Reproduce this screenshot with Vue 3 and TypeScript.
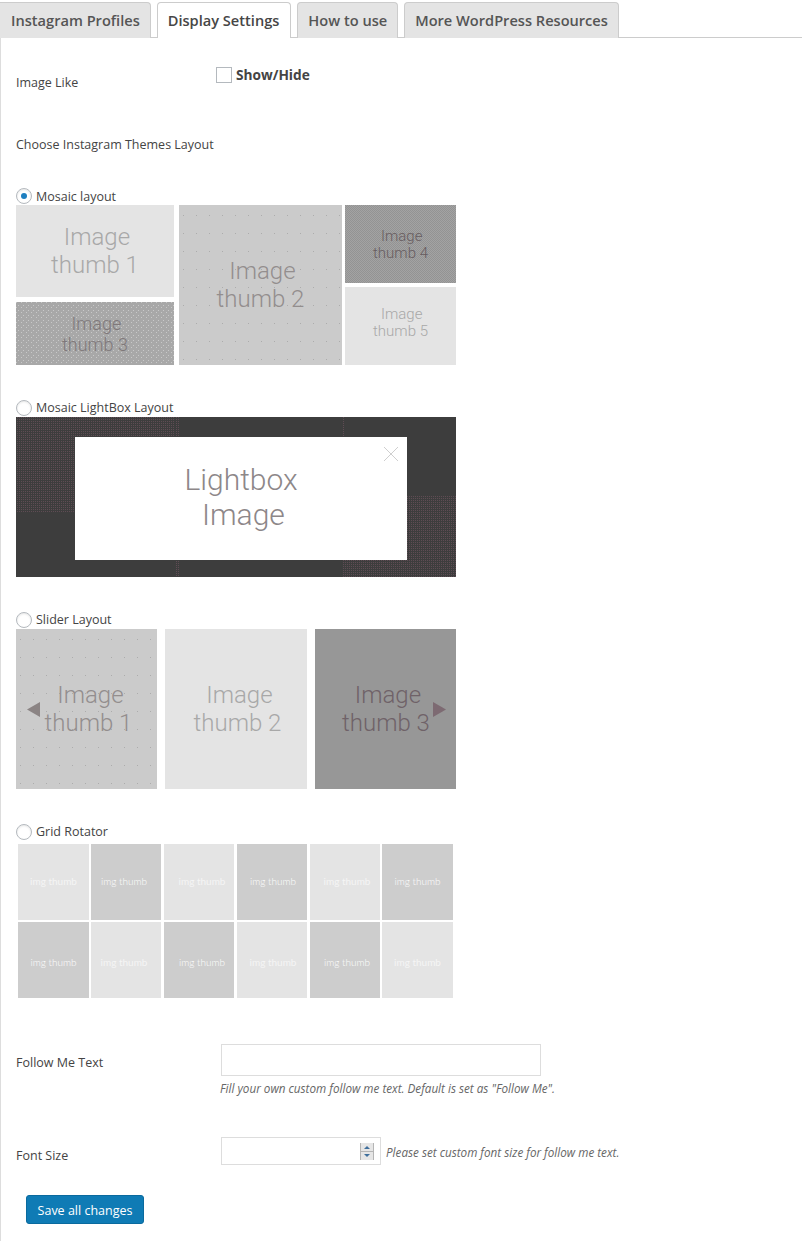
<script setup lang="ts">
const tabs = [
  { label: 'Instagram Profiles', active: false },
  { label: 'Display Settings', active: true },
  { label: 'How to use', active: false },
  { label: 'More WordPress Resources', active: false },
]
const gridCells = [
  'l', 'd', 'l', 'd', 'l', 'd',
  'd', 'l', 'd', 'l', 'd', 'l',
]
</script>

<template>
  <div class="page">
    <nav class="tabs">
      <a v-for="t in tabs" :key="t.label" class="tab" :class="{ active: t.active }">{{ t.label }}</a>
    </nav>

    <main class="content">
      <div class="row-like">
        <span class="label like-label">Image Like</span>
        <span class="check"></span>
        <strong class="show">Show/Hide</strong>
      </div>

      <p class="label choose">Choose Instagram Themes Layout</p>

      <section class="layout first">
        <div class="radio-row"><span class="radio on"></span><span class="label">Mosaic layout</span></div>
        <div class="mosaic">
          <div class="col col-a">
            <div class="thumb big light t1"><span><b>Image</b>thumb 1</span></div>
            <div class="thumb mid t3"><span><b>Image</b>thumb 3</span></div>
          </div>
          <div class="thumb big medium t2"><span><b>Image</b>thumb 2</span></div>
          <div class="col col-c">
            <div class="thumb small t4"><span><b>Image</b>thumb 4</span></div>
            <div class="thumb small light t5"><span><b>Image</b>thumb 5</span></div>
          </div>
        </div>
      </section>

      <section class="layout">
        <div class="radio-row"><span class="radio"></span><span class="label">Mosaic LightBox Layout</span></div>
        <div class="lightbox">
          <i class="patch p1"></i>
          <i class="patch p2"></i>
          <i class="patch p3"></i>
          <i class="patch p4"></i>
          <div class="modal">
            <span><b>Lightbox</b><b class="second">Image</b></span>
            <svg class="close" width="16" height="16" viewBox="0 0 16 16" aria-hidden="true">
              <path d="M1 1 L15 15 M15 1 L1 15" stroke="#cfcfcf" stroke-width="1" fill="none" />
            </svg>
          </div>
        </div>
      </section>

      <section class="layout">
        <div class="radio-row"><span class="radio"></span><span class="label">Slider Layout</span></div>
        <div class="slider">
          <div class="thumb big medium s1">
            <span><b>Image</b>thumb 1</span>
            <svg class="arrow left" width="13" height="15" viewBox="0 0 13 15" aria-hidden="true"><path d="M13 0 V15 L0 7.5 Z" fill="#8b8484" /></svg>
          </div>
          <div class="thumb big light s2"><span><b>Image</b>thumb 2</span></div>
          <div class="thumb big s3">
            <span><b>Image</b>thumb 3</span>
            <svg class="arrow right" width="13" height="15" viewBox="0 0 13 15" aria-hidden="true"><path d="M0 0 V15 L13 7.5 Z" fill="#7d6a72" /></svg>
          </div>
        </div>
      </section>

      <section class="layout">
        <div class="radio-row"><span class="radio"></span><span class="label">Grid Rotator</span></div>
        <div class="grid">
          <div v-for="(c, i) in gridCells" :key="i" class="cell" :class="c === 'l' ? 'cell-l' : 'cell-d'">img thumb</div>
        </div>
      </section>

      <div class="field follow">
        <span class="label field-label">Follow Me Text</span>
        <div class="field-main">
          <input class="input text" type="text" />
          <p class="hint">Fill your own custom follow me text. Default is set as "Follow Me".</p>
        </div>
      </div>

      <div class="field size">
        <span class="label field-label size-label">Font Size</span>
        <div class="num-wrap">
          <input class="input num" type="text" />
          <svg class="spin" width="14" height="17" viewBox="0 0 14 17" aria-hidden="true">
            <rect x="0" y="0" width="14" height="8" fill="#e6e6e6" />
            <rect x="0" y="9" width="14" height="8" fill="#e6e6e6" />
            <path d="M0 8.5 H14 M0.5 0 V17 M13.5 0 V17" stroke="#b5b5b5" stroke-width="1" fill="none" />
            <path d="M7 3 L10 6 H4 Z" fill="#3f6f9c" />
            <path d="M4 11 H10 L7 14 Z" fill="#3f6f9c" />
          </svg>
        </div>
        <p class="hint inline">Please set custom font size for follow me text.</p>
      </div>

      <button class="save" type="button">Save all changes</button>
    </main>
  </div>
</template>

<style scoped>
.page {
  width: 802px;
  height: 1241px;
  overflow: hidden;
  background: #fff;
  font-family: "Open Sans", "Noto Sans", sans-serif;
  color: #444;
  box-sizing: border-box;
}
.tabs {
  display: flex;
  gap: 6px;
  height: 38px;
  box-sizing: border-box;
  padding-top: 2px;
  border-bottom: 1px solid #ccc;
}
.tab {
  box-sizing: border-box;
  height: 36px;
  padding: 0 10px 2px;
  display: flex;
  align-items: center;
  font-size: 14.6px;
  font-weight: 600;
  color: #555;
  background: #e4e4e4;
  border: 1px solid #ccc;
  border-bottom: none;
  border-radius: 4px 4px 0 0;
}
.tab:first-child {
  border-left: none;
  border-radius: 0 4px 0 0;
  padding-left: 11px;
}
.tab.active {
  background: #fff;
  color: #464646;
  position: relative;
  z-index: 1;
  padding-right: 11px;
}
.content {
  border-left: 1px solid #ddd;
  padding-left: 15px;
  height: 1203px;
  box-sizing: border-box;
}
.label {
  font-size: 12.5px;
  line-height: 16px;
  color: #444;
}
.row-like {
  display: flex;
  align-items: flex-start;
  padding-top: 29px;
  height: 55px;
  box-sizing: border-box;
}
.like-label {
  width: 200px;
  margin-top: 8px;
}
.check {
  width: 16px;
  height: 16px;
  box-sizing: border-box;
  border: 1px solid #b4b9be;
  background: #fff;
  flex: none;
}
.show {
  margin-left: 4px;
  font-size: 13.7px;
  line-height: 16px;
  font-weight: 700;
  color: #444;
}
.choose {
  margin: 44px 0 0;
}
.layout {
  margin-top: 34px;
}
.radio-row {
  display: flex;
  align-items: flex-end;
  gap: 4px;
  height: 18px;
}
.radio-row .label {
  margin-bottom: 1px;
}
.first .radio-row .label {
  margin-bottom: 0;
}
.radio {
  width: 16px;
  height: 16px;
  box-sizing: border-box;
  border: 1px solid #b4b9be;
  border-radius: 50%;
  background: #fff;
  box-shadow: inset 0 1px 2px rgba(0, 0, 0, 0.1);
  display: flex;
  align-items: center;
  justify-content: center;
  margin-bottom: 1px;
}
.radio.on::before {
  content: "";
  width: 6px;
  height: 6px;
  border-radius: 50%;
  background: #1e7fc0;
}
.mosaic {
  display: flex;
  width: 440px;
  height: 160px;
}
.col {
  display: flex;
  flex-direction: column;
  height: 160px;
}
.col-a {
  width: 158px;
  gap: 5px;
}
.col-c {
  width: 111px;
  gap: 4px;
  margin-left: 3px;
}
.thumb {
  position: relative;
  display: flex;
  align-items: center;
  justify-content: center;
  text-align: center;
  font-family: Roboto, "Open Sans", sans-serif;
  font-weight: 300;
  font-size: 24px;
  line-height: 28px;
  color: #a8a8a8;
  flex: none;
}
.thumb b,
.modal b {
  display: block;
  font-weight: inherit;
}
.thumb b {
  padding-left: 0.16em;
}
.modal .second {
  padding-left: 0.16em;
}
.light {
  background: #e4e4e4;
}
.medium {
  background-color: #cbcbcb;
  background-image: radial-gradient(circle at 0.5px 0.5px, #acacac 0.7px, transparent 0.71px);
  background-position: 4px 10px;
  background-size: 13px 18px;
  color: #938e8e;
}
.t1 {
  height: 92px;
}
.t2 {
  width: 163px;
  height: 160px;
  margin-left: 5px;
}
.t3 {
  height: 63px;
  font-size: 18px;
  line-height: 21px;
  background-color: #a8a8a8;
  background-image:
    radial-gradient(circle at 0.5px 0.5px, #c8c8c8 0.7px, transparent 0.71px),
    radial-gradient(circle at 0.5px 0.5px, #c8c8c8 0.7px, transparent 0.71px);
  background-position: 0 0, 2px 3px;
  background-size: 5px 5px;
  color: #7f787a;
}
.t4 {
  height: 78px;
  font-size: 15px;
  line-height: 17px;
  padding-top: 1px;
  box-sizing: border-box;
  background: repeating-conic-gradient(#a3a3a3 0 25%, #939393 0 50%) 0 0 / 2px 2px;
  color: #675c60;
}
.t5 {
  height: 78px;
  font-size: 15px;
  line-height: 17px;
  padding-bottom: 6px;
  box-sizing: border-box;
  color: #a8a8a8;
}
.lightbox {
  position: relative;
  width: 440px;
  height: 160px;
  background: #3d3d3d;
  padding: 20px 0 0 59px;
  box-sizing: border-box;
}
.patch {
  position: absolute;
  background: conic-gradient(#5f4c54 25%, transparent 0) 0 0 / 2px 2px;
}
.p1 {
  left: 0;
  top: 0;
  width: 159px;
  height: 95px;
}
.p2 {
  left: 159px;
  top: 0;
  width: 4px;
  height: 160px;
}
.p3 {
  left: 326px;
  top: 0;
  width: 3px;
  height: 20px;
}
.p4 {
  left: 326px;
  top: 79px;
  width: 114px;
  height: 81px;
}
.modal {
  position: relative;
  width: 332px;
  height: 123px;
  padding-bottom: 4px;
  box-sizing: border-box;
  background: #fff;
  display: flex;
  align-items: center;
  justify-content: center;
  text-align: center;
  font-family: Roboto, "Open Sans", sans-serif;
  font-weight: 300;
  font-size: 30px;
  line-height: 35px;
  color: #8d8789;
}
.close {
  position: absolute;
  right: 8px;
  top: 9px;
}
.slider {
  display: flex;
  width: 440px;
  height: 160px;
}
.s1 {
  width: 141px;
  height: 160px;
  padding-left: 4px;
  box-sizing: border-box;
}
.s2 {
  width: 142px;
  height: 160px;
  margin-left: 8px;
  padding-left: 3px;
  box-sizing: border-box;
}
.s3 {
  width: 141px;
  height: 160px;
  margin-left: 8px;
  background: #979797;
  color: #6f6268;
  padding-left: 1px;
  box-sizing: border-box;
}
.arrow {
  position: absolute;
  top: 73px;
}
.arrow.left {
  left: 11px;
}
.arrow.right {
  right: 10px;
}
.grid {
  display: grid;
  grid-template-columns: 73px 73px 73px 73px 72px 71px;
  grid-auto-rows: 76px;
  row-gap: 2px;
  margin: 3px 0 0 2px;
}
.cell {
  width: 70px;
  display: flex;
  align-items: center;
  justify-content: center;
  padding-bottom: 2px;
  font-family: Lato, "Open Sans", sans-serif;
  font-weight: 300;
  font-size: 10px;
  color: #fff;
  box-sizing: border-box;
}
.cell:nth-child(6n + 1),
.cell:nth-child(6n) {
  width: 71px;
}
.cell:nth-child(6n + 2) {
  padding-right: 4px;
}
.cell:nth-child(6n + 3) {
  padding-left: 6px;
}
.cell:nth-child(6n + 4) {
  padding-left: 2px;
}
.cell:nth-child(6n + 5) {
  padding-left: 4px;
}
.cell:nth-child(n + 7) {
  padding-top: 4px;
  padding-bottom: 0;
}
.cell-l {
  background: #e4e4e4;
  font-weight: 400;
  color: #f5f5f5;
}
.cell-d {
  background: #cdcdcd;
}
.field {
  display: flex;
  align-items: flex-start;
}
.follow {
  margin-top: 46px;
}
.field-label {
  width: 205px;
  flex: none;
  margin-top: 11px;
}
.input {
  display: block;
  box-sizing: border-box;
  border: 1px solid #ddd;
  background: #fff;
  padding: 0;
  outline: none;
  margin: 0;
}
.text {
  width: 320px;
  height: 32px;
}
.hint {
  margin: 4px 0 0 -1px;
  font-size: 11.7px;
  line-height: 16px;
  font-style: italic;
  color: #666;
}
.size {
  margin-top: 41px;
}
.num-wrap {
  position: relative;
  flex: none;
}
.num {
  width: 160px;
  height: 28px;
}
.spin {
  position: absolute;
  left: 139px;
  top: 6px;
}
.hint.inline {
  margin: 7px 0 0 5px;
}
.save {
  display: block;
  margin: 30px 0 0 10px;
  width: 118px;
  height: 29px;
  box-sizing: border-box;
  padding: 1px 0 0;
  background: #0f7bb5;
  border: 1px solid #0a6a9e;
  border-radius: 3px;
  color: #fff;
  font-family: "Open Sans", sans-serif;
  font-size: 12.5px;
}
</style>
